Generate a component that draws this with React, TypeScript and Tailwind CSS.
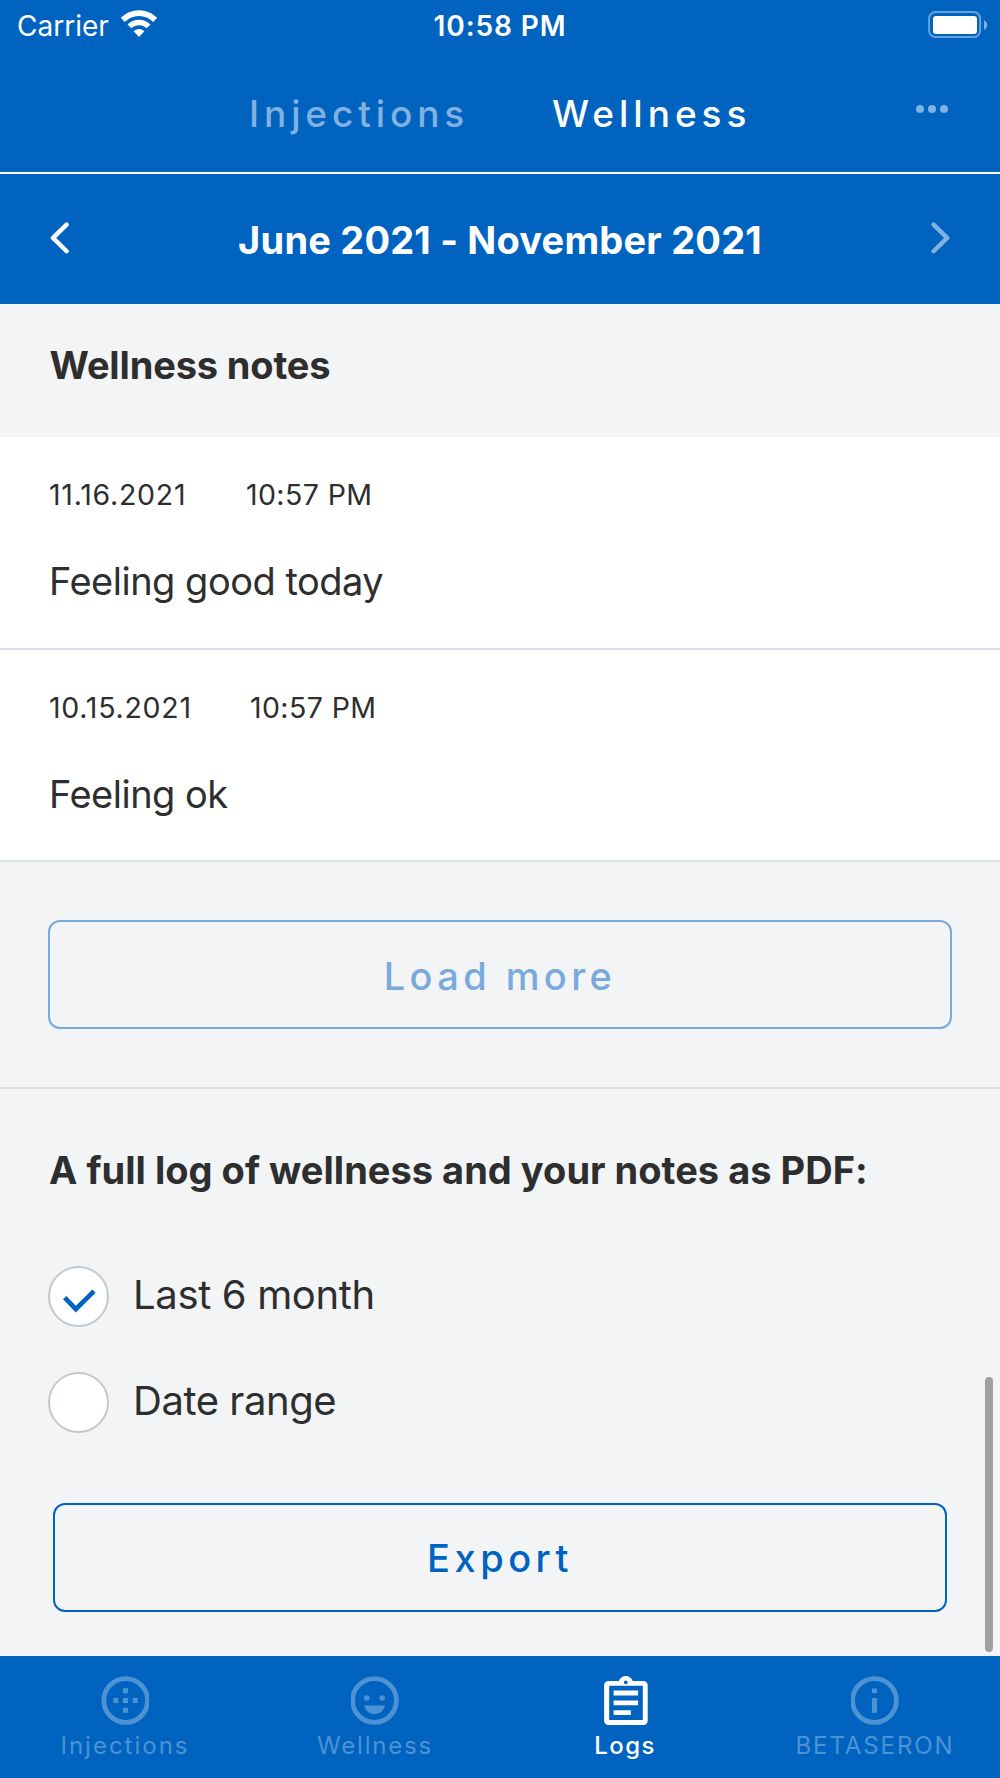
import React, { useState } from 'react';

const notes = [
  { date: '11.16.2021', time: '10:57 PM', text: 'Feeling good today', dateClass: 'w-[197px]' },
  { date: '10.15.2021', time: '10:57 PM', text: 'Feeling ok', dateClass: 'w-[201px]' },
];

const WifiIcon = () => (
  <svg width="38" height="28" viewBox="0 0 38 28" fill="#fff">
    <path d="M19 0.2C26 0.2 32.3 3 37.2 7.8L33.2 12C29.4 8.3 24.6 6 19 6S8.6 8.3 4.8 12L0.8 7.8C5.7 3 12 0.2 19 0.2Z" />
    <path d="M19 9.7C23.4 9.7 27.4 11.4 30.5 14.4L26.6 18.3C24.5 16.4 22 15.2 19 15.2S13.5 16.4 11.4 18.3L7.5 14.4C10.6 11.4 14.6 9.7 19 9.7Z" />
    <path d="M19 18.9C21.2 18.9 23 19.8 24.4 21.3L19 27L13.6 21.3C15 19.8 16.8 18.9 19 18.9Z" />
  </svg>
);

const BatteryIcon = () => (
  <svg width="60" height="28" viewBox="0 0 60 28">
    <rect x="1.1" y="1.1" width="51" height="25" rx="6.5" fill="none" stroke="#fff" strokeOpacity="0.4" strokeWidth="2" />
    <rect x="5" y="5" width="44" height="18" rx="3.2" fill="#fff" />
    <path d="M56 9.3C58 10 59.2 11.8 59.2 14S58 18 56 18.9Z" fill="#fff" fillOpacity="0.5" />
  </svg>
);

const InjectionsIcon = () => (
  <svg width="48" height="49" viewBox="0 0 48 49" fill="currentColor">
    <circle cx="24.7" cy="24.5" r="21.9" fill="none" stroke="currentColor" strokeWidth="4.8" />
    <path d="M22 12.3h5v4.9h-5zM22 22h5v4.9h-5zM22 31.8h5v4.9h-5zM12.3 22h4.9v4.9h-4.9zM31.8 22h4.9v4.9h-4.9z" />
  </svg>
);

const WellnessIcon = () => (
  <svg width="48" height="49" viewBox="1 0 48 49" fill="currentColor">
    <circle cx="24.5" cy="24.5" r="21.9" fill="none" stroke="currentColor" strokeWidth="4.8" />
    <circle cx="16.8" cy="22" r="2.8" />
    <circle cx="32.2" cy="22" r="2.8" />
    <path d="M14 29.5H35C33.7 34.6 29.6 38 24.5 38S15.3 34.6 14 29.5Z" />
  </svg>
);

const LogsIcon = () => (
  <svg width="49" height="49" viewBox="0 0 49 49">
    <path
      fill="currentColor"
      fillRule="evenodd"
      d="M7.4 5H17.9C18.8 2 21.5 0 24.8 0S30.8 2 31.7 5H42.4C44.9 5 46.7 6.8 46.7 9.3V44.7C46.7 47.2 44.9 49 42.4 49H7.4C4.9 49 3.1 47.2 3.1 44.7V9.3C3.1 6.8 4.9 5 7.4 5ZM8.2 9.8V44H41.8V9.8ZM24.8 4.4A1.9 1.9 0 1 0 24.8 8.2A1.9 1.9 0 1 0 24.8 4.4Z"
    />
    <path fill="currentColor" d="M12.6 14.6H37.1V19.5H12.6ZM12.6 24.4H37.1V29.3H12.6ZM12.6 34.2H29.8V39.1H12.6Z" />
  </svg>
);

const InfoIcon = () => (
  <svg width="48" height="49" viewBox="1 0 48 49" fill="currentColor">
    <circle cx="24.5" cy="24.5" r="21.9" fill="none" stroke="currentColor" strokeWidth="4.8" />
    <path d="M22 12.6h5v4.4h-5zM22 22h5v14.8h-5z" />
  </svg>
);

const CheckMark = () => (
  <svg className="mt-[5px] overflow-visible" width="34" height="24" viewBox="0 0 34 24" fill="none" stroke="#0063c0" strokeWidth="4.6">
    <path d="M2.7 10.7L13.8 22.2L32 4.2" />
  </svg>
);

const options = [
  { id: 'last', label: 'Last 6 month', labelClass: 'tracking-[-0.35px]' },
  { id: 'dates', label: 'Date range', labelClass: 'tracking-[-0.45px]' },
];

const navItems = [
  { id: 'injections', label: 'Injections', icon: InjectionsIcon, labelClass: 'tracking-[2px]' },
  { id: 'wellness', label: 'Wellness', icon: WellnessIcon, labelClass: 'tracking-[1.8px]' },
  { id: 'logs', label: 'Logs', icon: LogsIcon, labelClass: 'tracking-[1.4px]' },
  { id: 'betaseron', label: 'BETASERON', icon: InfoIcon, labelClass: 'tracking-[1.9px]' },
];

export default function App() {
  const [range, setRange] = useState('last');
  const [active, setActive] = useState('logs');

  return (
    <div className="relative flex h-[1778px] w-[1000px] flex-col overflow-hidden bg-[#f2f4f6] font-['Inter',sans-serif] text-[#2e2e2e]">
      {/* Status bar */}
      <div className="grid h-[51px] shrink-0 grid-cols-3 items-center bg-[#0063c0] text-white">
        <div className="flex items-center pl-[17px] text-[28px]">
          <span className="w-[103px]">Carrier</span>
          <div className="-mt-[3px]">
            <WifiIcon />
          </div>
        </div>
        <span className="text-center text-[28px] font-semibold tracking-[0.9px]">10:58 PM</span>
        <div className="-mt-[2px] flex justify-end pr-3">
          <BatteryIcon />
        </div>
      </div>

      {/* Tabs */}
      <header className="flex h-[123px] shrink-0 items-center border-b-2 border-white bg-[#0063c0] pl-[249px] text-[37px] font-medium leading-[44px] text-white">
        <button className="w-[303px] pt-1 text-left tracking-[4.9px] text-[#80b1e0]">Injections</button>
        <button className="w-[364px] pt-1 text-left tracking-[5px]">Wellness</button>
        <svg className="mb-[5px]" width="32" height="8" viewBox="0 0 32 8" fill="#80b1e0">
          <circle cx="4" cy="4" r="4" />
          <circle cx="16" cy="4" r="4" />
          <circle cx="28" cy="4" r="4" />
        </svg>
      </header>

      {/* Period selector */}
      <div className="flex h-[130px] shrink-0 items-center justify-between bg-[#0063c0] px-[50px] text-white">
        <button className="-mt-[2px]">
          <svg width="20" height="34" viewBox="0 0 20 34" fill="none" stroke="#fff" strokeWidth="4.4" strokeLinecap="round" strokeLinejoin="round">
            <path d="M16.6 3.6L3 16.9L16.6 30.2" />
          </svg>
        </button>
        <h1 className="pt-[2px] text-[38px] font-bold leading-[46px] tracking-[0.2px]">June 2021 - November 2021</h1>
        <button className="-mt-[2px]">
          <svg width="20" height="34" viewBox="0 0 20 34" fill="none" stroke="#80b1e0" strokeWidth="4.4" strokeLinecap="round" strokeLinejoin="round">
            <path d="M3.6 3.6L17.2 16.9L3.6 30.2" />
          </svg>
        </button>
      </div>

      <h2 className="h-[133px] shrink-0 pl-[49.5px] pt-[38px] text-[38px] font-bold leading-[46px] tracking-[-0.15px]">Wellness notes</h2>

      {/* Notes */}
      {notes.map((note, index) => (
        <div key={index} className="flex h-[212.5px] shrink-0 flex-col border-b-2 border-[#d8dfe6] bg-white pl-[49px] pt-[40px]">
          <div className="flex text-[28.5px] leading-[36px]">
            <span className={`tracking-[0.75px] ${note.dateClass}`}>{note.date}</span>
            <span className="tracking-[0.4px]">{note.time}</span>
          </div>
          <p className="mt-[45px] text-[38px] leading-[46px] tracking-[-0.5px]">{note.text}</p>
        </div>
      ))}

      <div className="h-[227px] shrink-0 border-b-2 border-[#d8dfe6] px-12 pt-[58px]">
        <button className="h-[109px] w-full rounded-[12px] border-[2.5px] border-[#79aadb] pt-[3px] text-[38px] font-medium tracking-[4.4px] text-[#79aadb]">
          Load more
        </button>
      </div>

      {/* PDF export */}
      <section className="flex grow flex-col px-12 pt-[58px]">
        <h2 className="pl-px text-[38px] font-bold leading-[46px] tracking-[0.02px]">A full log of wellness and your notes as PDF:</h2>
        <div className="mt-[73px] flex flex-col gap-[45px] text-[40px] leading-[60px]">
          {options.map((option) => (
            <button key={option.id} className="flex h-[61px] items-center gap-6" onClick={() => setRange(option.id)}>
              <span className="flex size-[61px] items-center justify-center rounded-full border-2 border-[#c3c8ce] bg-white">
                {range === option.id && <CheckMark />}
              </span>
              <span className={`pb-[3px] ${option.labelClass}`}>{option.label}</span>
            </button>
          ))}
        </div>
        <button className="mx-[5px] mt-[70px] h-[109px] rounded-[12px] border-[2.5px] border-[#0063c0] pt-[2px] text-[38px] font-medium tracking-[4.5px] text-[#0063c0]">
          Export
        </button>
      </section>

      {/* Scroll indicator */}
      <div className="absolute right-[7px] top-[1377px] h-[275px] w-2 rounded-full bg-[#9d9fa0]" />

      {/* Bottom navigation */}
      <nav className="flex h-[122px] shrink-0 bg-[#0063c0]">
        {navItems.map((item) => (
          <button
            key={item.id}
            onClick={() => setActive(item.id)}
            className={`flex w-1/4 flex-col items-center pt-5 ${active === item.id ? 'font-medium text-white' : 'text-[#4d92d3]'}`}
          >
            <item.icon />
            <span className={`mt-[6px] text-[24px] leading-[30px] ${item.labelClass}`}>{item.label}</span>
          </button>
        ))}
      </nav>
    </div>
  );
}
